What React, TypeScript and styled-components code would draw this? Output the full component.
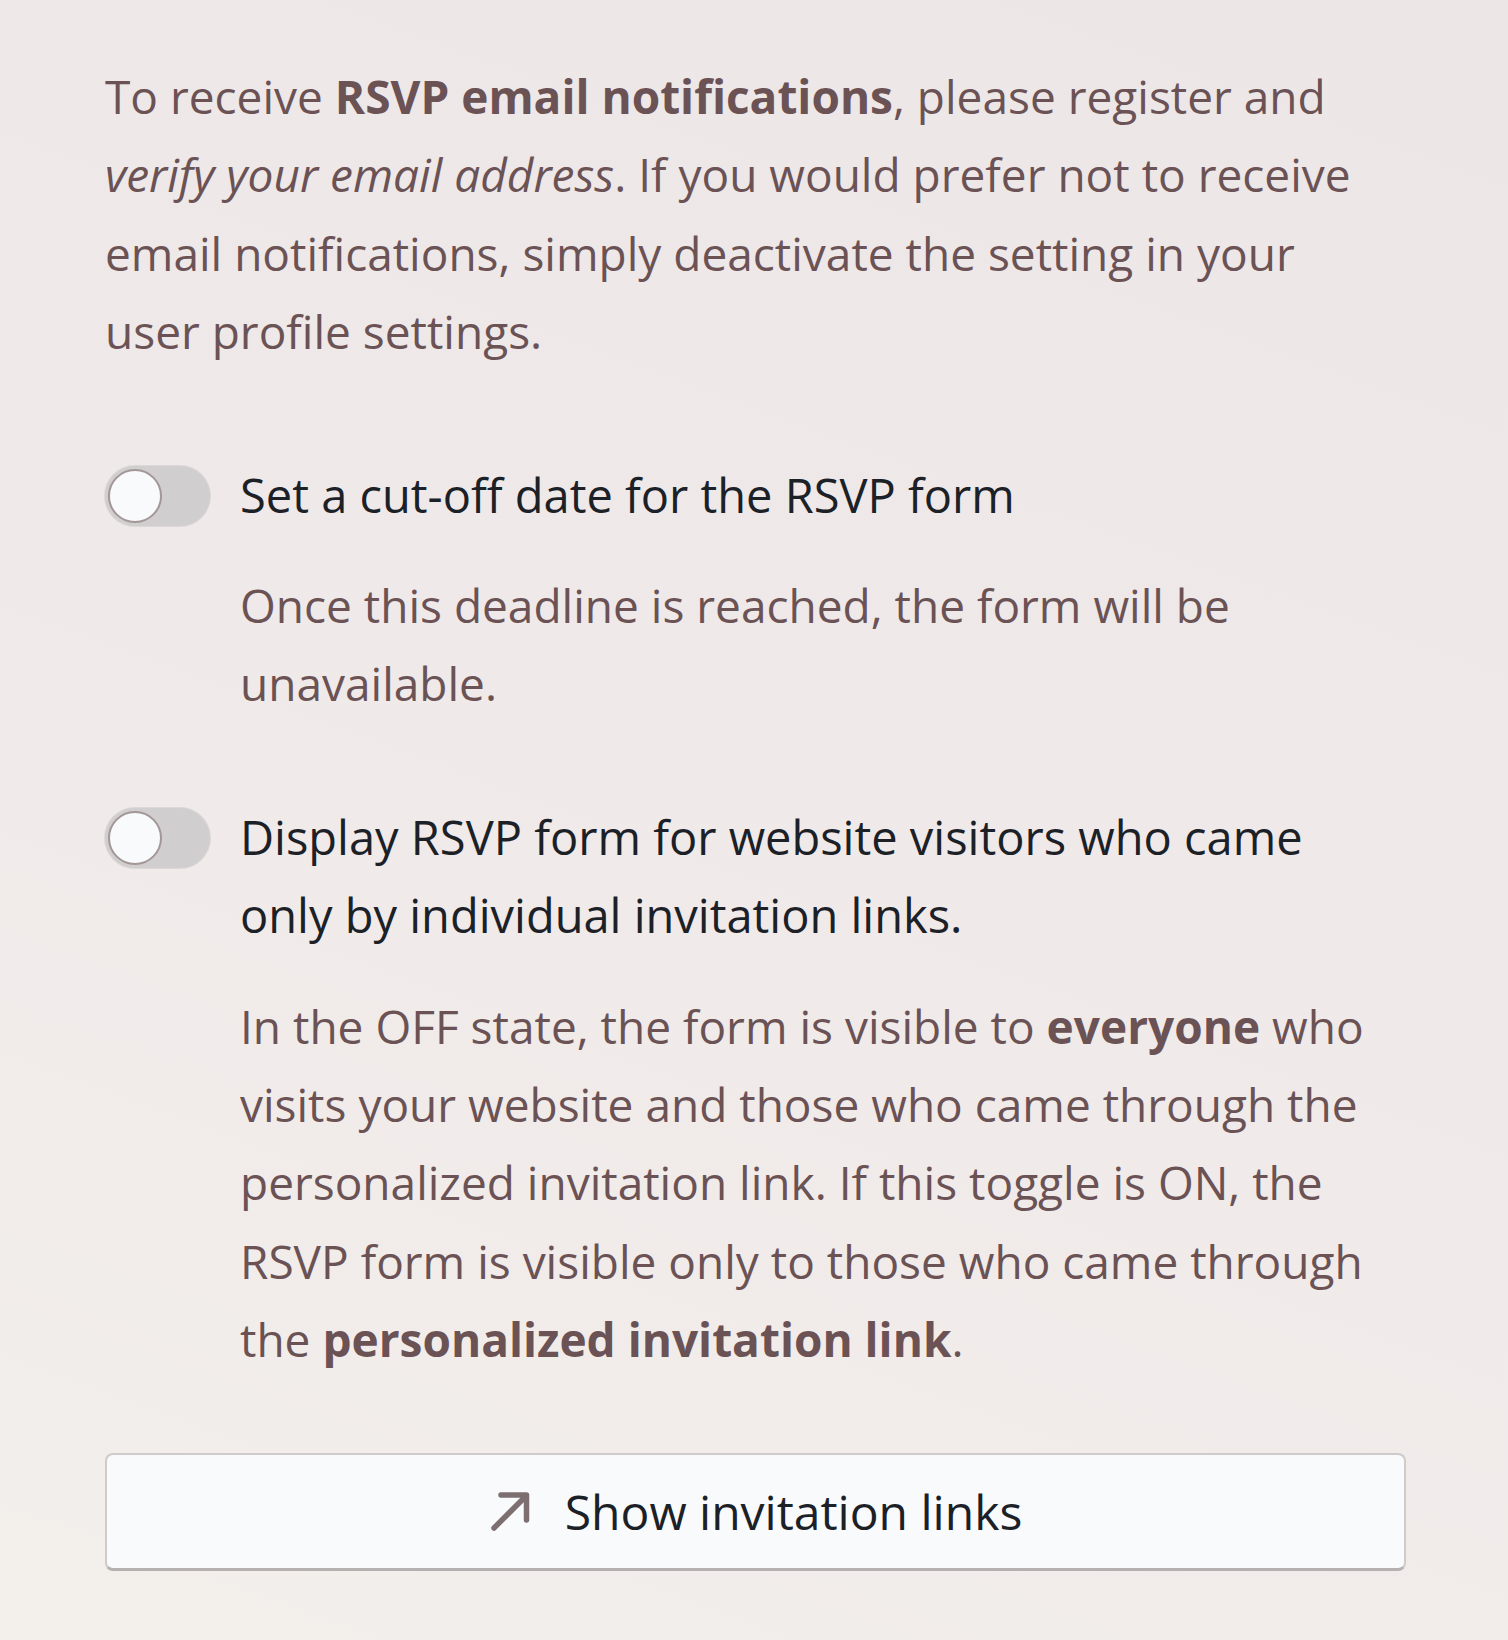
import styled, { createGlobalStyle } from "styled-components";

const GlobalStyle = createGlobalStyle`
  html, body {
    margin: 0;
    padding: 0;
  }
  body {
    min-height: 1640px;
    background: linear-gradient(200deg, #ece6e7 0%, #efe9e9 45%, #f3efeb 100%);
    font-family: "Open Sans", "Noto Sans", sans-serif;
  }
`;

const Page = styled.main`
  box-sizing: border-box;
  width: 1508px;
  padding: 57px 102px 60px 105px;
  display: flex;
  flex-direction: column;
`;

const Intro = styled.p`
  margin: 0 0 86px;
  padding-right: 20px;
  font-size: 46px;
  line-height: 78.4px;
  color: #6b5254;

  strong {
    font-weight: 700;
  }
`;

const Setting = styled.section`
  display: grid;
  grid-template-columns: 105px 1fr;
  column-gap: 30px;

  & + & {
    margin-top: 76px;
  }
`;

const Track = styled.div`
  box-sizing: border-box;
  width: 105px;
  height: 60px;
  margin-top: 9px;
  padding: 0 3px;
  display: flex;
  align-items: center;
  border-radius: 30px;
  background: #d1cecf;
  box-shadow: 0 0 0 1px #dcd8d8;
`;

const Knob = styled.span`
  box-sizing: border-box;
  width: 54px;
  height: 54px;
  border-radius: 50%;
  border: 2px solid #a39696;
  background: #f8fafc;
`;

const Body = styled.div`
  display: flex;
  flex-direction: column;
  gap: 32px;
`;

const Title = styled.h3`
  margin: -1px 0 0;
  padding-right: 20px;
  font-size: 47px;
  font-weight: 400;
  line-height: 78.4px;
  color: #1c2127;
`;

const Description = styled.p`
  margin: 0;
  font-size: 46px;
  line-height: 78.4px;
  color: #6b5254;

  strong {
    font-weight: 700;
  }
`;

const LinkButton = styled.button`
  box-sizing: border-box;
  width: 100%;
  height: 118px;
  margin-top: 74px;
  display: flex;
  align-items: center;
  justify-content: center;
  gap: 32px;
  border: 2px solid #d0cbcb;
  border-bottom: 3px solid #b7b0b0;
  border-radius: 8px;
  background: #f8fafc;
  font-family: inherit;
  font-size: 48px;
  color: #1c2127;
  cursor: pointer;
`;

const Toggle = () => (
  <Track>
    <Knob />
  </Track>
);

const ArrowIcon = () => (
  <svg width="44" height="44" viewBox="0 0 44 44" fill="none">
    <path
      d="M5 39 L36 8 M12 6 H37.5 V31"
      stroke="#7d6f70"
      strokeWidth="5.5"
      strokeLinecap="round"
      strokeLinejoin="round"
    />
  </svg>
);

export default function App() {
  return (
    <>
      <GlobalStyle />
      <Page>
        <Intro>
          To receive <strong>RSVP email notifications</strong>, please register and{" "}
          <em>verify your email address</em>. If you would prefer not to receive email
          notifications, simply deactivate the setting in your user profile settings.
        </Intro>

        <Setting>
          <Toggle />
          <Body>
            <Title>Set a cut-off date for the RSVP form</Title>
            <Description>Once this deadline is reached, the form will be unavailable.</Description>
          </Body>
        </Setting>

        <Setting>
          <Toggle />
          <Body>
            <Title>Display RSVP form for website visitors who came only by individual invitation links.</Title>
            <Description>
              In the OFF state, the form is visible to <strong>everyone</strong> who visits your
              website and those who came through the personalized invitation link. If this toggle
              is ON, the RSVP form is visible only to those who came through the{" "}
              <strong>personalized invitation link</strong>.
            </Description>
          </Body>
        </Setting>

        <LinkButton>
          <ArrowIcon />
          Show invitation links
        </LinkButton>
      </Page>
    </>
  );
}
